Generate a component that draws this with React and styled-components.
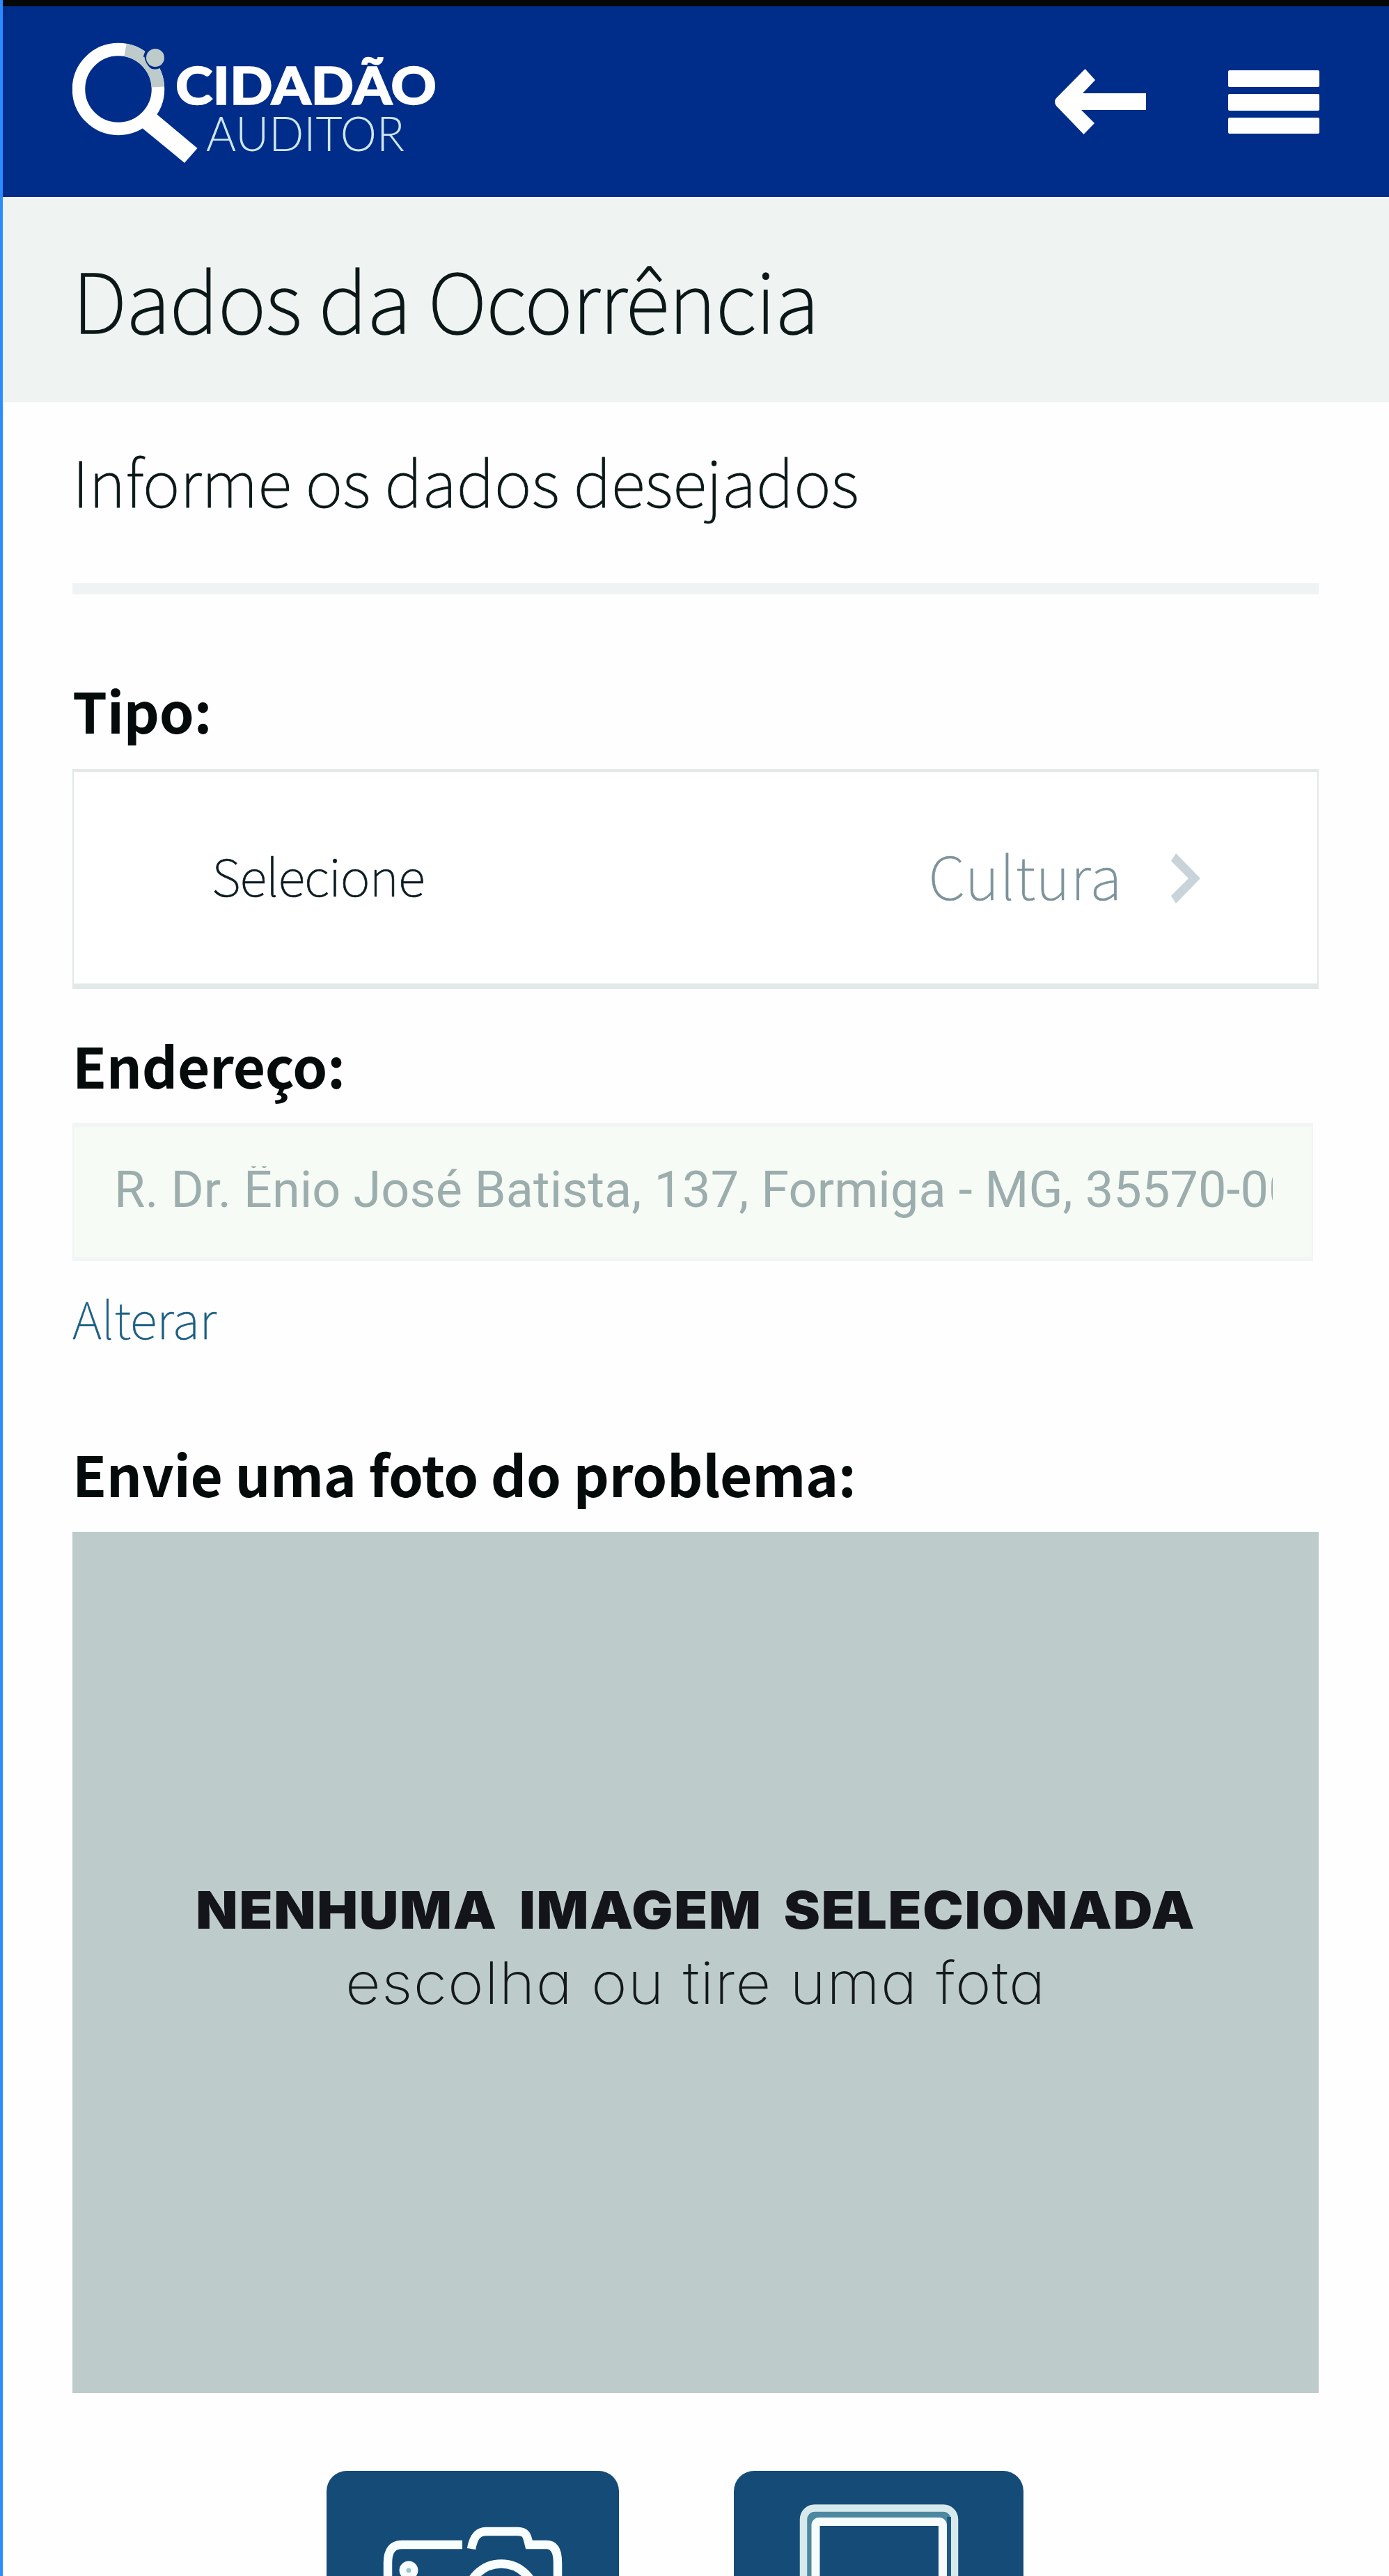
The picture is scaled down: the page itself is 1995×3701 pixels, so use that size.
import React from "react";
import styled, { createGlobalStyle } from "styled-components";

const GlobalStyle = createGlobalStyle`
  * { box-sizing: border-box; }
  body { margin: 0; background: #fff; }
`;

const sans = '"Noto Sans CJK SC", "Open Sans", sans-serif';

const Page = styled.div`
  height: 3701px;
  overflow: hidden;
  background: #fefefe;
  border-left: 4px solid #2b8cff;
`;

const StatusStrip = styled.div`
  height: 9px;
  background: #050808;
`;

const Header = styled.header`
  height: 274px;
  display: flex;
  align-items: center;
  padding: 0 99px 0 100px;
  background: #002d8a;
`;

const HeaderActions = styled.nav`
  display: flex;
  align-items: center;
  gap: 117px;
  margin-left: auto;
`;

const IconButton = styled.button`
  display: flex;
  padding: 0;
  border: 0;
  background: none;
`;

const TitleBand = styled.div`
  height: 295px;
  padding: 70px 100px 0;
  background: #eff3f2;
`;

const Title = styled.h1`
  margin: 0;
  font: 100 118px/150px ${sans};
  letter-spacing: -0.8px;
  color: #0c1818;
  -webkit-text-stroke: 1.6px #0c1818;
`;

const Content = styled.main`
  display: flex;
  flex-direction: column;
  width: 1890px;
  padding-left: 100px;
`;

const Intro = styled.p`
  margin: 51px 0 89px;
  font: 100 91px/120px ${sans};
  letter-spacing: 0.13px;
  color: #0c1818;
  -webkit-text-stroke: 1px #0c1818;
`;

const Divider = styled.hr`
  width: 100%;
  height: 16px;
  margin: 0;
  border: 0;
  background: #eff3f3;
`;

const Label = styled.label`
  margin: ${(p) => p.$top}px 0 ${(p) => p.$bottom}px;
  font: 700 80px/100px ${sans};
  letter-spacing: -0.35px;
  color: #050a0a;
`;

const SelectBox = styled.div`
  height: 316px;
  display: flex;
  align-items: center;
  padding: 0 168px 10px 198px;
  border: solid #e2e9e8;
  border-width: 4px 2px 8px;
  background: #fff;
`;

const SelectHint = styled.span`
  font: 100 73px/100px ${sans};
  letter-spacing: -1px;
  color: #0c1c20;
  -webkit-text-stroke: 0.7px #0c1c20;
`;

const SelectValue = styled.span`
  margin: 0 70px 0 auto;
  font: 100 85px/110px ${sans};
  letter-spacing: 0.9px;
  color: #7d939c;
  -webkit-text-stroke: 0.7px #7d939c;
`;

const Chevron = styled.svg`
  display: block;
  margin-top: 11px;
`;

const AddressField = styled.div`
  width: 1782px;
  height: 199px;
  display: flex;
  align-items: center;
  padding: 0 56px 6px 58px;
  border: solid #f1f5f6;
  border-width: 6px 2px;
  background: #f7fbf5;
`;

const AddressText = styled.span`
  flex: 1;
  overflow: hidden;
  white-space: nowrap;
  font: 400 72px/112px Roboto, sans-serif;
  letter-spacing: 0.08px;
  color: #9badac;
  clip-path: inset(22px 0 0 0);
`;

const ChangeLink = styled.a`
  align-self: flex-start;
  margin-top: 30px;
  font: 100 73px/100px ${sans};
  letter-spacing: -0.4px;
  color: #1b5f82;
  -webkit-text-stroke: 0.5px #1b5f82;
`;

const PhotoPreview = styled.div`
  height: 1237px;
  padding-top: 493px;
  display: flex;
  flex-direction: column;
  align-items: center;
  gap: 5px;
  background: #becbcb;
`;

const PreviewTitle = styled.strong`
  font: 900 74px/100px Inter, sans-serif;
  letter-spacing: 1.6px;
  word-spacing: 13px;
  white-space: nowrap;
  color: #14151a;
  transform: scaleX(1.06);
`;

const PreviewHint = styled.span`
  font: 200 84px/100px Inter, sans-serif;
  font-feature-settings: "cv11";
  letter-spacing: 1.1px;
  white-space: nowrap;
  color: #14191c;
  transform: scaleX(1.05);
`;

const PhotoActions = styled.div`
  display: flex;
  gap: 165px;
  margin: 112px 0 0 365px;
`;

const PhotoButton = styled.button`
  display: flex;
  width: ${(p) => p.$width}px;
  height: 151px;
  padding: 0;
  border: 0;
  border-radius: 29px 29px 0 0;
  overflow: hidden;
  background: #154b77;
`;

function Logo() {
  return (
    <svg width="540" height="274" viewBox="104 9 540 274" role="img" aria-label="Cidadão Auditor">
      <circle cx="170" cy="128" r="57" fill="none" stroke="#fff" strokeWidth="18.5" />
      <path d="M180 71.9 A57 57 0 0 1 226.9 125" fill="none" stroke="#becbcb" strokeWidth="18.5" />
      <path d="M225 164 L283.5 213 L265 234 L203 183 Z" fill="#fff" />
      <circle cx="222.500" cy="83" r="16.500" fill="#002d8a" />
      <path d="M206 82 Q207 92 216 100" fill="none" stroke="#becbcb" strokeWidth="3" />
      <circle cx="223" cy="83" r="13" fill="#becbcb" />
      <text x="252" y="150" fontFamily="Lato, sans-serif" fontWeight="900" fontSize="75" fill="#fff" stroke="#fff" strokeWidth="1.5" textLength="375" lengthAdjust="spacingAndGlyphs">CIDADÃO</text>
      <text x="296" y="217" fontFamily="Lato, sans-serif" fontWeight="300" fontSize="69" fill="#cfe6ec" textLength="285" lengthAdjust="spacingAndGlyphs">AUDITOR</text>
    </svg>
  );
}

function BackIcon() {
  return (
    <svg width="131" height="94" viewBox="1515 100 131 94" fill="#fff">
      <path d="M1646 135 V159 H1553 L1572 178 L1556.500 194 L1517 153 Q1513 147 1517 142 L1558.500 100 L1573 116 L1555 135 Z" />
    </svg>
  );
}

function MenuIcon() {
  return (
    <svg width="133" height="93" viewBox="0 0 133 93" fill="#fff">
      <rect x="1" y="1" width="131" height="24" rx="2" />
      <rect x="1" y="35" width="131" height="24" rx="2" />
      <rect x="1" y="69" width="131" height="23" rx="2" />
    </svg>
  );
}

function CameraIcon() {
  return (
    <svg width="420" height="151" viewBox="469 3550 420 151" fill="none" stroke="#f8fdfd" strokeWidth="12.500">
      <path d="M557 3710 V3682 Q557 3656 577 3656 H664" />
      <path d="M677 3662 C680 3645 686 3637 698 3637 H744 C757 3637 757 3645 760 3656 H785 Q801 3656 801 3682 V3710" />
      <circle cx="720" cy="3733" r="49.500" />
      <circle cx="587" cy="3693" r="8.500" strokeWidth="10" fill="#9fc3cd" />
    </svg>
  );
}

function TabletIcon() {
  return (
    <svg width="416" height="151" viewBox="1054 3550 416 151">
      <rect x="1154" y="3603.500" width="217" height="200" rx="16" fill="#4d88a0" stroke="#d8e9ec" strokeWidth="10.500" />
      <path d="M1363 3616 V3701" stroke="#1f5a80" strokeWidth="6" />
      <rect x="1171.500" y="3623" width="182.500" height="180" rx="5" fill="#154b77" stroke="#f6fbfb" strokeWidth="12" />
    </svg>
  );
}

export default function App() {
  return (
    <Page>
      <GlobalStyle />
      <StatusStrip />
      <Header>
        <Logo />
        <HeaderActions>
          <IconButton aria-label="Voltar"><BackIcon /></IconButton>
          <IconButton aria-label="Menu"><MenuIcon /></IconButton>
        </HeaderActions>
      </Header>
      <TitleBand>
        <Title>Dados da Ocorrência</Title>
      </TitleBand>
      <Content>
        <Intro>Informe os dados desejados</Intro>
        <Divider />
        <Label $top={115} $bottom={36}>Tipo:</Label>
        <SelectBox>
          <SelectHint>Selecione</SelectHint>
          <SelectValue>Cultura</SelectValue>
          <Chevron width="42" height="72" viewBox="0 0 42 72">
            <path d="M7 0 L42 36 L7 72 L0 61 L25 36 L0 11 Z" fill="#c8d3da" />
          </Chevron>
        </SelectBox>
        <Label $top={58} $bottom={34}>Endereço:</Label>
        <AddressField>
          <AddressText>R. Dr. Ënio José Batista, 137, Formiga - MG, 35570-000</AddressText>
        </AddressField>
        <ChangeLink>Alterar</ChangeLink>
        <Label $top={124} $bottom={35}>Envie uma foto do problema:</Label>
        <PhotoPreview>
          <PreviewTitle>NENHUMA IMAGEM SELECIONADA</PreviewTitle>
          <PreviewHint>escolha ou tire uma fota</PreviewHint>
        </PhotoPreview>
        <PhotoActions>
          <PhotoButton $width={420} aria-label="Tirar foto"><CameraIcon /></PhotoButton>
          <PhotoButton $width={416} aria-label="Escolher imagem"><TabletIcon /></PhotoButton>
        </PhotoActions>
      </Content>
    </Page>
  );
}
